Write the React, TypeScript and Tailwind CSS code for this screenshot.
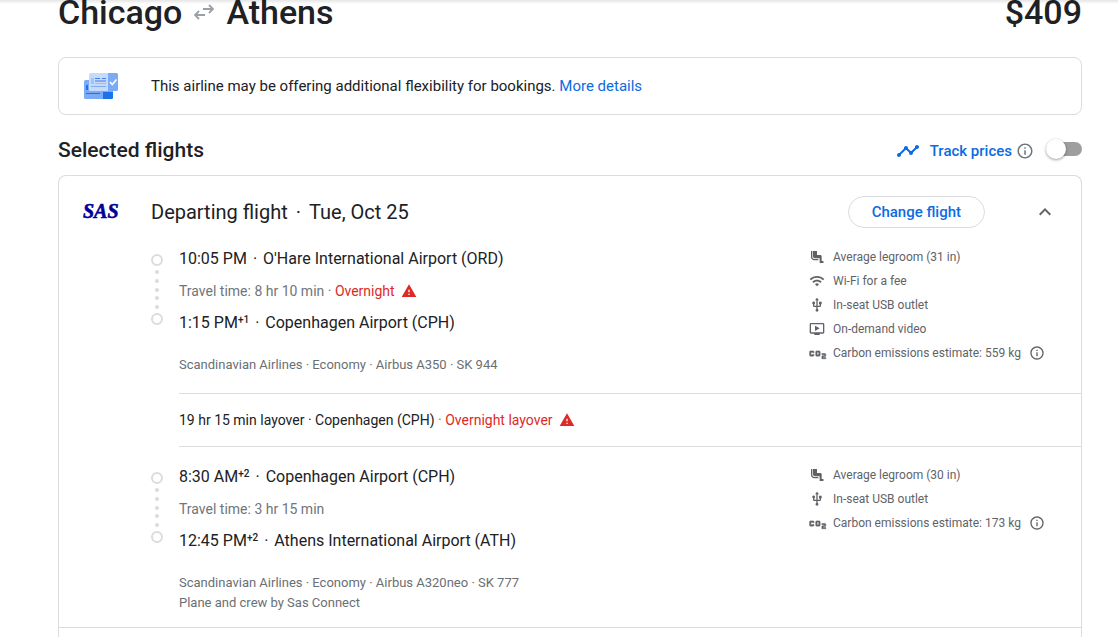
import type { ReactNode } from "react";
import type { IconType } from "react-icons";
import {
  MdAirlineSeatLegroomNormal,
  MdCo2,
  MdExpandLess,
  MdInfoOutline,
  MdOndemandVideo,
  MdTimeline,
  MdUsb,
  MdWarning,
  MdWifi,
} from "react-icons/md";

type Stop = { time: string; dayOffset?: string; airport: string };

type Amenity = { icon: IconType; label: string; wide?: boolean };

type Leg = {
  from: Stop;
  to: Stop;
  duration: string;
  overnight?: boolean;
  details: string[];
  amenities: Amenity[];
};

const LEGS: Leg[] = [
  {
    from: { time: "10:05 PM", airport: "O'Hare International Airport (ORD)" },
    to: { time: "1:15 PM", dayOffset: "+1", airport: "Copenhagen Airport (CPH)" },
    duration: "8 hr 10 min",
    overnight: true,
    details: ["Scandinavian Airlines · Economy · Airbus A350 · SK 944"],
    amenities: [
      { icon: MdAirlineSeatLegroomNormal, label: "Average legroom (31 in)" },
      { icon: MdWifi, label: "Wi-Fi for a fee" },
      { icon: MdUsb, label: "In-seat USB outlet" },
      { icon: MdOndemandVideo, label: "On-demand video" },
      { icon: MdCo2, label: "Carbon emissions estimate: 559 kg", wide: true },
    ],
  },
  {
    from: { time: "8:30 AM", dayOffset: "+2", airport: "Copenhagen Airport (CPH)" },
    to: { time: "12:45 PM", dayOffset: "+2", airport: "Athens International Airport (ATH)" },
    duration: "3 hr 15 min",
    details: [
      "Scandinavian Airlines · Economy · Airbus A320neo · SK 777",
      "Plane and crew by Sas Connect",
    ],
    amenities: [
      { icon: MdAirlineSeatLegroomNormal, label: "Average legroom (30 in)" },
      { icon: MdUsb, label: "In-seat USB outlet" },
      { icon: MdCo2, label: "Carbon emissions estimate: 173 kg", wide: true },
    ],
  },
];

function SwapArrows() {
  return (
    <svg width="20" height="16" viewBox="0 0 20 16" fill="none" stroke="#9aa0a6" strokeWidth="1.8">
      <path d="M9 5h10M15 1l4 4-4 4" />
      <path d="M11 11H1M5 7l-4 4 4 4" />
    </svg>
  );
}

function TicketIcon() {
  return (
    <svg width="36" height="28" viewBox="0 0 36 28">
      <rect x="1" y="8" width="29" height="19" rx="1.5" fill="#7baaf7" />
      <path d="M20 20h10v5.5a1.5 1.5 0 0 1-1.5 1.5H20z" fill="#1a73e8" />
      <rect x="3" y="13" width="2" height="5" fill="#1a73e8" />
      <rect x="3" y="21" width="14" height="1" fill="#1a73e8" />
      <rect x="6" y="1" width="20" height="18" rx="1.5" fill="#c6dafc" />
      <path d="M25 1h8.5A1.5 1.5 0 0 1 35 2.5v15a1.5 1.5 0 0 1-1.5 1.5H25z" fill="#7baaf7" />
      <rect x="8" y="6" width="3" height="6" fill="#a1c2fa" />
      <path d="M12 6.5h5M19 6.5h4M12 9h11" stroke="#3f7fe8" strokeWidth="1" />
      <path d="M12 11.5h11" stroke="#f0b55a" strokeWidth="1.2" />
      <path d="M8 14.5h15" stroke="#7baaf7" />
      <path d="m27 10 2.3 2.5 4.2-5" fill="none" stroke="#fff" strokeWidth="1.5" />
    </svg>
  );
}

function SasLogo() {
  return (
    <svg width="36" height="16" viewBox="0 0 36 16" className="shrink-0 overflow-visible">
      <text
        x="0"
        y="14"
        fill="#000099"
        stroke="#000099"
        strokeWidth="0.6"
        className="font-['Liberation_Serif',serif] text-[20px] font-bold italic"
      >
        SAS
      </text>
    </svg>
  );
}

function Warning({ children }: { children: ReactNode }) {
  return (
    <span className="inline-flex items-center gap-1.5 text-[#de2a26]">
      {children}
      <MdWarning size={16} />
    </span>
  );
}

function StopLine({ stop }: { stop: Stop }) {
  return (
    <p className="text-base leading-8 text-[#202124]">
      {stop.time}
      {stop.dayOffset && (
        <sup className="text-[10px] font-medium">{stop.dayOffset}</sup>
      )}
      <span className="mx-1.5">·</span>
      {stop.airport}
    </p>
  );
}

function Timeline() {
  return (
    <div className="mt-[11px] flex h-[71px] flex-col items-center">
      <span className="size-3 rounded-full border-2 border-[#dadce0]" />
      <div className="flex flex-1 flex-col justify-between py-1">
        {[0, 1, 2, 3, 4].map((dot) => (
          <span key={dot} className="size-1 rounded-full bg-[#dadce0]" />
        ))}
      </div>
      <span className="size-3 rounded-full border-2 border-[#dadce0]" />
    </div>
  );
}

function LegRow({ leg }: { leg: Leg }) {
  return (
    <div className="flex items-start pt-3.5 pr-8 pb-3.5 pl-[92px]">
      <Timeline />
      <div className="ml-4 flex-1">
        <StopLine stop={leg.from} />
        <p className="text-sm leading-8 text-[#70757a]">
          Travel time: {leg.duration}
          {leg.overnight && (
            <>
              {" · "}
              <Warning>Overnight</Warning>
            </>
          )}
        </p>
        <StopLine stop={leg.to} />
        <div className="mt-4 text-[13px] leading-5 text-[#6a6f74]">
          {leg.details.map((line) => (
            <p key={line}>{line}</p>
          ))}
        </div>
      </div>
      <ul className="w-60 pt-0.5 text-xs leading-6 text-[#5f6368]">
        {leg.amenities.map(({ icon: Icon, label, wide }) => (
          <li key={label} className="flex items-center gap-2">
            <span className="flex w-4 justify-center">
              <Icon
                className={
                  wide
                    ? "size-[21px] shrink-0 [&>path:last-child]:stroke-current [&>path:last-child]:stroke-[0.6]"
                    : "size-4 shrink-0"
                }
                strokeWidth={0}
              />
            </span>
            {label}
            {wide && <MdInfoOutline size={16} />}
          </li>
        ))}
      </ul>
    </div>
  );
}

export default function App() {
  return (
    <main className="relative min-h-screen overflow-hidden bg-white pr-9 pl-[58px] font-[Roboto,sans-serif] text-[#202124]">
      <div className="absolute inset-x-0 top-0 h-1 bg-gradient-to-b from-black/10 to-transparent" />

      <header className="flex items-center justify-between text-[34px] leading-6 font-medium">
        <h1 className="flex items-center gap-3">
          Chicago
          <SwapArrows />
          Athens
        </h1>
        <span>$409</span>
      </header>

      <section className="mt-[33px] flex h-[58px] items-center gap-8 rounded-lg border border-[#dadce0] pl-6 text-[15px]">
        <TicketIcon />
        <p>
          This airline may be offering additional flexibility for bookings.{" "}
          <a href="#details" className="text-[#0b6be3]">
            More details
          </a>
        </p>
      </section>

      <div className="mt-5 flex h-8 items-center justify-between">
        <h2 className="text-[21px] font-medium">Selected flights</h2>
        <div className="flex items-center">
          <MdTimeline size={24} className="text-[#0b6be3]" />
          <label htmlFor="track" className="ml-2.5 text-[15px] font-medium text-[#0b6be3]">
            Track prices
          </label>
          <MdInfoOutline size={18} className="ml-1 text-[#70757a]" />
          <span className="relative mb-1 ml-3 flex h-5 w-9 items-center">
            <input
              id="track"
              type="checkbox"
              role="switch"
              className="peer ml-1 h-3.5 w-8 appearance-none rounded-full bg-[#9e9e9e] checked:bg-[#8ab4f8]"
            />
            <span className="pointer-events-none absolute left-0 size-5 rounded-full bg-white shadow-[0_1px_3px_rgba(0,0,0,0.4)] peer-checked:left-4 peer-checked:bg-[#0b6be3]" />
          </span>
        </div>
      </div>

      <section className="mt-2 rounded-t-lg border border-b-0 border-[#dadce0]">
        <div className="flex items-center pt-5 pr-6 pb-px pl-6">
          <SasLogo />
          <h3 className="ml-8 flex-1 text-xl">
            Departing flight<span className="mx-2">·</span>Tue, Oct 25
          </h3>
          <button className="h-8 rounded-full border border-[#dadce0] px-[23px] text-[15px] font-medium text-[#0b6be3]">
            Change flight
          </button>
          <button aria-label="Collapse" className="ml-12 text-[#5f6368]">
            <MdExpandLess size={24} />
          </button>
        </div>

        <LegRow leg={LEGS[0]} />
        <div className="mt-1 ml-[120px] border-y border-[#dadce0] py-4 text-sm leading-5">
          19 hr 15 min layover · Copenhagen (CPH) <span className="text-[#70757a]">·</span>{" "}
          <Warning>Overnight layover</Warning>
        </div>
        <LegRow leg={LEGS[1]} />

        <div className="h-2.5 border-t border-[#dadce0]" />
      </section>
    </main>
  );
}
